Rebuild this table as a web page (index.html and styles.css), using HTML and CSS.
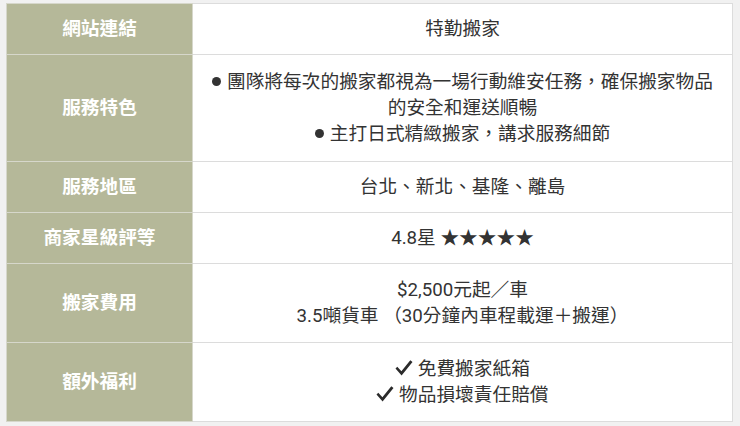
FILE: index.html
```html
<!DOCTYPE html>
<html lang="zh-Hant">
<head>
<meta charset="utf-8">
<link rel="stylesheet" href="styles.css">
</head>
<body>
<table class="info">
  <tr class="r1">
    <th>網站連結</th>
    <td>特勤搬家</td>
  </tr>
  <tr class="r2">
    <th>服務特色</th>
    <td>
      <ul class="bullets">
        <li>團隊將每次的搬家都視為一場行動維安任務，確保搬家物品的安全和運送順暢</li>
        <li>主打日式精緻搬家，講求服務細節</li>
      </ul>
    </td>
  </tr>
  <tr class="r3">
    <th>服務地區</th>
    <td>台北、新北、基隆、離島</td>
  </tr>
  <tr class="r4">
    <th>商家星級評等</th>
    <td>4.8星 <span class="stars">★★★★★</span></td>
  </tr>
  <tr class="r5">
    <th>搬家費用</th>
    <td>$2,500元起／車<br>3.5噸貨車 （30分鐘內車程載運＋搬運）</td>
  </tr>
  <tr class="r6">
    <th>額外福利</th>
    <td><svg class="chk" viewBox="0 0 18 18" width="18" height="18"><path d="M0.5 9.5 L2.3 7.8 L6.4 12.2 L15.3 1.2 L17.5 3 L6.6 16.6 Z"/></svg> 免費搬家紙箱<br><svg class="chk" viewBox="0 0 18 18" width="18" height="18"><path d="M0.5 9.5 L2.3 7.8 L6.4 12.2 L15.3 1.2 L17.5 3 L6.6 16.6 Z"/></svg> 物品損壞責任賠償</td>
  </tr>
</table>
</body>
</html>
```

FILE: styles.css
```css
html, body {
  margin: 0;
  background: #f1f1f1;
}
body {
  padding: 3px 7px 4px 6px;
  font-family: Roboto, "Noto Sans CJK TC", sans-serif;
}
.info {
  width: 727px;
  border-collapse: collapse;
  background: #fff;
  table-layout: fixed;
}
.info th, .info td {
  border: 1px solid #dcdcdc;
  text-align: center;
  vertical-align: middle;
  font-size: 18.7px;
  line-height: 26px;
  padding: 12px 14px;
}
.info th {
  width: 157px;
  background: #b5b899;
  color: #fff;
  font-weight: 700;
  border-color: #d6d7cb;
}
.info td {
  color: #333;
  font-weight: 400;
}
.r2 td, .r2 th { padding-top: 14px; padding-bottom: 14px; }
.r5 td, .r5 th, .r6 td, .r6 th { padding-top: 13px; padding-bottom: 13px; }
.bullets {
  list-style: none;
  margin: 0;
  padding: 0;
}
.bullets li::before {
  content: "";
  display: inline-block;
  width: 9px;
  height: 9px;
  border-radius: 50%;
  background: #333;
  margin-right: 6px;
  vertical-align: 2px;
}
.chk {
  fill: #2b2b2b;
  vertical-align: -2px;
}
```
